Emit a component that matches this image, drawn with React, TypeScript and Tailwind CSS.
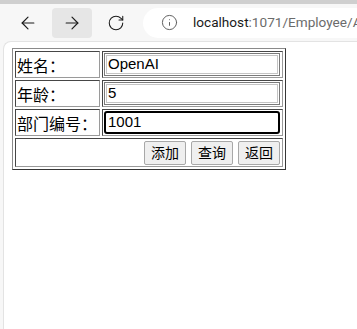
import React from "react";
import { ArrowLeft, ArrowRight, RotateCw, Info } from "lucide-react";

export default function App() {
  const rows: { label: string; value: string; focused?: boolean }[] = [
    { label: "姓名：", value: "OpenAI" },
    { label: "年龄：", value: "5" },
    { label: "部门编号：", value: "1001", focused: true },
  ];
  return (
    <div className="w-[357px] h-[329px] bg-[#f7f7f7] flex flex-col overflow-hidden">
      <div className="h-[4px] bg-[#cfcfcf]" />
      <div className="h-[37px] flex items-center pl-[8px] shrink-0">
        <div className="w-[40px] h-[30px] flex items-center justify-center rounded-[4px] text-[#1a1a1a]">
          <ArrowLeft size={20} strokeWidth={1.4} />
        </div>
        <div className="ml-[4px] w-[40px] h-[30px] flex items-center justify-center rounded-[4px] bg-[#e6e6e6] text-[#1a1a1a]">
          <ArrowRight size={20} strokeWidth={1.4} />
        </div>
        <div className="ml-[4px] w-[40px] h-[30px] flex items-center justify-center rounded-[4px] text-[#1a1a1a]">
          <RotateCw size={18} strokeWidth={1.4} />
        </div>
        <div className="ml-[7px] flex-1 min-w-0 h-[30px] bg-white rounded-l-full flex items-center pl-[18px] whitespace-nowrap overflow-hidden font-['Roboto',sans-serif] text-[13.6px]">
          <Info size={17} strokeWidth={1.4} className="text-[#5f5f5f] shrink-0" />
          <span className="ml-[15px] text-[#1a1a1a]">localhost</span>
          <span className="text-[#6b6b6b]">:1071/Employee/A</span>
        </div>
      </div>
      <div className="flex-1 ml-[3px] bg-white border-l border-t border-[#e3e3e3] rounded-tl-[8px] pl-[8px] pt-[6px]">
        <table className="border-separate border-spacing-[2px] border border-[#8a8a8a] [border-style:outset] font-['Noto_Sans_CJK_SC',sans-serif]">
          <tbody>
            {rows.map((r) => (
              <tr key={r.label}>
                <td className="w-[85px] h-[27px] p-[1px] border border-[#9a9a9a] [border-style:inset] text-[16px] leading-[20px] text-black whitespace-nowrap align-middle">
                  {r.label}
                </td>
                <td className="w-[181px] h-[27px] p-[1px] border border-[#9a9a9a] [border-style:inset] align-middle">
                  {r.focused ? (
                    <div className="w-[176px] h-[23px] border-2 border-black rounded-[3px] flex items-center pl-[2px] font-['Liberation_Sans',sans-serif] text-[15px] text-black">
                      {r.value}
                    </div>
                  ) : (
                    <div className="w-[176px] h-[23px] border border-[#7a7a7a] shadow-[inset_0_0_0_1px_#fff,inset_0_0_0_2px_#c4c4c4] flex items-center pl-[3px] font-['Liberation_Sans',sans-serif] text-[15px] text-black">
                      {r.value}
                    </div>
                  )}
                </td>
              </tr>
            ))}
            <tr>
              <td
                colSpan={2}
                className="h-[29px] p-[1px] border border-[#9a9a9a] [border-style:inset] align-middle"
              >
                <div className="flex justify-end gap-[5px] pr-[1px]">
                  {["添加", "查询", "返回"].map((b) => (
                    <div
                      key={b}
                      className="w-[42px] h-[24px] flex items-center justify-center bg-[#efefef] border border-[#a8a8a8] rounded-[2px] text-[14px] text-black"
                    >
                      {b}
                    </div>
                  ))}
                </div>
              </td>
            </tr>
          </tbody>
        </table>
      </div>
    </div>
  );
}
